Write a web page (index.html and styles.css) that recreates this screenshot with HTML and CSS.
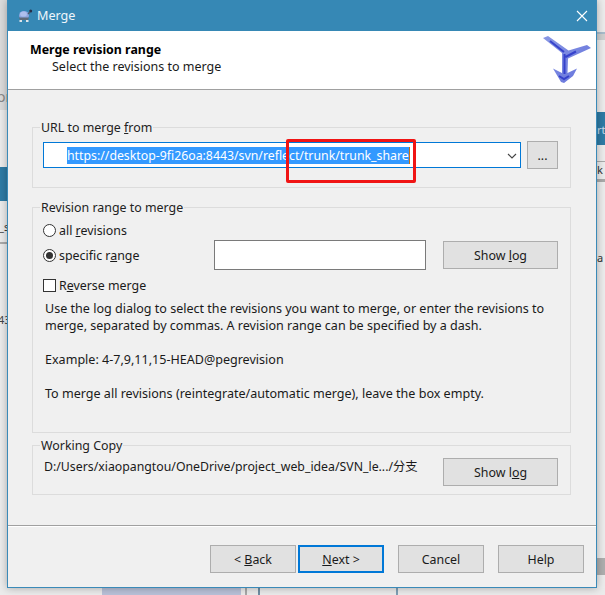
FILE: index.html
```html
<!DOCTYPE html>
<html lang="en">
<head>
<meta charset="utf-8">
<title>Merge</title>
<link rel="stylesheet" href="styles.css">
</head>
<body>
<div class="desktop">
  <div class="bg-left">
    <div class="bg-l1"></div>
    <div class="bg-l2">or</div>
    <div class="bg-l3"></div>
    <div class="bg-l4">_s</div>
    <div class="bg-l6"></div>
    <div class="bg-l5">43</div>
  </div>
  <div class="bg-right">
    <div class="bg-r1"></div>
    <div class="bg-r2">rt</div>
    <div class="bg-r3">k</div>
    <div class="bg-r5"></div>
    <div class="bg-r4">a</div>
    <div class="bg-r6"></div>
  </div>
  <div class="bg-bottom">
    <div class="bg-shape"></div>
    <div class="bg-line l1"></div>
    <div class="bg-line l2"></div>
    <div class="bg-line l3"></div>
  </div>
  <main class="window">
    <header class="titlebar">
      <svg class="app-icon" width="16" height="14" viewBox="0 0 16 14" aria-hidden="true">
        <ellipse cx="7" cy="6.500" rx="5" ry="4.600" fill="#8ea6df"/>
        <ellipse cx="6.500" cy="5" rx="3.400" ry="2.600" fill="#aebfec"/>
        <circle cx="13.700" cy="2" r="1.500" fill="#27304a"/>
        <path d="M11 5 13 3" stroke="#4d5668" stroke-width="1.500"/>
        <path d="M2 8.500h10l-1 2.500H3z" fill="#5f6b78"/>
        <path d="M2.500 11h2.500v2H2.500zM9 11h2.500v2H9z" fill="#dfe4ea"/>
      </svg>
      <span class="title">Merge</span>
      <svg class="close" width="12" height="12" viewBox="0 0 12 12" aria-hidden="true"><path d="M1 1l10 10M11 1 1 11" stroke="#fff" stroke-width="1.100" fill="none"/></svg>
    </header>
    <section class="banner">
      <div class="banner-text">
        <h1>Merge revision range</h1>
        <p>Select the revisions to merge</p>
      </div>
      <svg class="logo" width="54" height="54" viewBox="0 3 54 54" aria-hidden="true">
        <defs>
          <linearGradient id="g" x1="0" y1="0" x2="1" y2="1"><stop offset="0" stop-color="#8a98e4"/><stop offset="1" stop-color="#6472dc"/></linearGradient>
        </defs>
        <path d="M3 8 8 6 28.500 20.500 47 15 51 18 28 28.500 27.500 43 37 38.500 33 46 24 53 21 52 13 38.500 22 43 22 23Z" fill="url(#g)"/>
        <path d="M24.500 24V44M25.500 27 36 21.500M10 11 24 22M19 46 24 49 29 46" stroke="#2a36c8" stroke-width="2" fill="none" opacity=".85"/>
      </svg>
    </section>
    <div class="content">
      <fieldset class="group url-group">
        <legend>URL to merge <u>f</u>rom</legend>
        <div class="url-row">
          <div class="combo">
            <span class="sel">https://desktop-9fi26oa:8443/svn/reflect/trunk/trunk_share</span>
            <svg class="chev" width="10" height="6" viewBox="0 0 10 6" aria-hidden="true"><path d="M1 1l4 4 4-4" stroke="#444" stroke-width="1.100" fill="none"/></svg>
          </div>
          <button class="btn dots" type="button">...</button>
        </div>
      </fieldset>
      <fieldset class="group range-group">
        <legend>Revision range to merge</legend>
        <div class="option first">
          <span class="radio"></span><span>all <u>r</u>evisions</span>
        </div>
        <div class="option specific">
          <span class="radio on"></span><span class="opt-label">specific r<u>a</u>nge</span>
          <div class="range-input"></div>
          <button class="btn wide" type="button">Show <u>l</u>og</button>
        </div>
        <div class="option reverse">
          <span class="check"></span><span>R<u>e</u>verse merge</span>
        </div>
        <div class="help">
          <p>Use the log dialog to select the revisions you want to merge, or enter the revisions to<br>merge, separated by commas. A revision range can be specified by a dash.</p>
          <p>Example: 4-7,9,11,15-HEAD@pegrevision</p>
          <p>To merge all revisions (reintegrate/automatic merge), leave the box empty.</p>
        </div>
      </fieldset>
      <fieldset class="group wc-group">
        <legend>Working Copy</legend>
        <div class="wc-row">
          <span class="path">D:/Users/xiaopangtou/OneDrive/project_web_idea/SVN_le.../分支</span>
          <button class="btn wide" type="button">Show l<u>o</u>g</button>
        </div>
      </fieldset>
    </div>
    <footer class="footer">
      <button class="btn nav" type="button">&lt; <u>B</u>ack</button>
      <button class="btn nav next" type="button"><u>N</u>ext &gt;</button>
      <button class="btn nav after" type="button">Cancel</button>
      <button class="btn nav after" type="button">Help</button>
    </footer>
  </main>
  <div class="annotation"></div>
</div>
</body>
</html>
```
FILE: styles.css
```css
* { box-sizing: border-box; }
html, body { margin: 0; padding: 0; }
body { width: 605px; height: 595px; overflow: hidden; background: #f1f1f1; font-family: "Noto Sans", "Noto Sans CJK SC", sans-serif; font-size: 12.400px; color: #1a1a1a; }
.desktop { position: relative; width: 605px; height: 595px; overflow: hidden; }
.bg-left { position: absolute; left: 0; top: 0; width: 7px; height: 595px; background: #ececec; font-size: 11px; color: #666; overflow: hidden; }
.bg-l1 { position: absolute; left: 4px; top: 0; width: 2px; height: 8px; background: #cbb9a8; }
.bg-l2 { position: absolute; left: 0; top: 0; width: 7px; height: 110px; background: #dcdcdc; padding-top: 87px; color: #888; font-size: 14px; text-indent: -3px; }
.bg-l3 { position: absolute; left: 0; top: 167px; width: 7px; height: 34px; background: #2e7ba5; }
.bg-l4 { position: absolute; left: 0; top: 219px; width: 7px; height: 18px; color: #333; line-height: 16px; text-indent: -1px; }
.bg-l6 { position: absolute; left: 0; top: 242px; width: 7px; height: 2px; background: #aaa; }
.bg-l5 { position: absolute; left: -2px; top: 312px; color: #444; }
.bg-right { position: absolute; right: 0; top: 0; width: 8px; height: 595px; background: #ececec; font-size: 11px; color: #333; overflow: hidden; }
.bg-r1 { position: absolute; left: 0; top: 32px; width: 8px; height: 8px; background: #cfcfcf; border-top: 2px solid #a8bccb; }
.bg-r2 { position: absolute; left: 0; top: 112px; width: 8px; height: 33px; background: #2e7ba5; color: #cde; padding-top: 10px; }
.bg-r3 { position: absolute; left: 0; top: 161px; width: 8px; height: 17px; border-top: 1px solid #aaa; }
.bg-r5 { position: absolute; left: 0; top: 179px; width: 8px; height: 3px; background: #aaa; }
.bg-r4 { position: absolute; left: 0; top: 250px; }
.bg-r6 { position: absolute; left: 0; top: 558px; width: 8px; height: 17px; background: #aeaeae; }
.bg-bottom { position: absolute; left: 0; top: 588px; width: 605px; height: 7px; background: #ebebeb; }
.bg-shape { position: absolute; left: 102px; top: 0; width: 139px; height: 7px; background: #b9c1d8; }
.bg-line { position: absolute; top: 0; width: 2px; height: 7px; }
.bg-line.l1 { left: 245px; background: #a8a8a8; }
.bg-line.l2 { left: 258px; background: #6f8ea3; }
.bg-line.l3 { left: 396px; background: #7f9fb5; }
.window { position: absolute; left: 7px; top: 0; width: 590px; height: 588px; background: #f0f0f0; border: 1px solid #3a8ab8; border-top: 0; display: flex; flex-direction: column; box-shadow: 0 0 8px rgba(0,0,0,.3); }
.titlebar { height: 31px; background: #3688b5; color: #fff; display: flex; align-items: center; padding: 0 8px 0 9px; flex: none; }
.app-icon { flex: none; margin-right: 4px; }
.title { font-size: 12.600px; flex: 1; color: #eef6fb; }
.banner { height: 59px; background: #fff; border-bottom: 1px solid #a0a0a0; display: flex; justify-content: space-between; align-items: flex-start; padding: 8px 2px 0 22px; flex: none; }
.banner h1 { margin: 2px 0 0; font-size: 12.400px; font-weight: 700; line-height: 17px; color: #000; }
.banner p { margin: 0 0 0 22px; font-size: 12.500px; line-height: 17px; }
.logo { margin-top: -6px; }
.content { flex: 1; padding: 0 25px 0 24px; border-bottom: 1px solid #a0a0a0; display: flex; flex-direction: column; min-height: 0; }
.group { margin: 0; padding: 0 12px 0 10px; border: 1px solid #dcdcdc; min-width: 0; flex: none; }
.group legend { padding: 0 1px; margin-left: -3px; line-height: 17px; color: #222; }
.url-group { height: 69px; margin-top: 29px; }
.url-row { display: flex; gap: 6px; align-items: flex-start; margin-top: 6px; }
.combo { flex: 1; height: 26px; background: #fff; border: 1px solid #0078d7; display: flex; align-items: center; padding: 0 3px 0 23px; justify-content: space-between; }
.sel { background: #3399ff; color: #fff; font-size: 12.300px; line-height: 17px; white-space: nowrap; border-right: 1px solid #c8700f; }
.chev { margin-top: 2px; }
.btn { font-family: inherit; font-size: 12.400px; color: #1a1a1a; background: #e1e1e1; border: 1px solid #adadad; padding: 0; }
.dots { width: 31px; height: 28px; margin-top: -1px; }
.wide { width: 115px; height: 28px; flex: none; }
.range-group { height: 234px; margin-top: 11px; }
.option { display: flex; align-items: center; height: 17px; }
.first { margin-top: 6px; }
.radio { width: 13px; height: 13px; border: 1px solid #333; border-radius: 50%; margin-right: 3px; background: #fff; position: relative; flex: none; }
.radio.on::after { content: ""; position: absolute; inset: 2px; border-radius: 50%; background: #333; }
.specific { margin-top: 1px; height: 30px; }
.opt-label { width: 155px; flex: none; }
.range-input { width: 212px; height: 30px; background: #fff; border: 1px solid #7a7a7a; margin-right: 17px; flex: none; }
.reverse { margin-top: 7px; }
.check { width: 13px; height: 13px; border: 1px solid #333; margin-right: 3px; background: #fff; flex: none; }
.help { margin: 6px 0 0 2px; font-size: 12.550px; line-height: 17px; }
.help p { margin: 0 0 17px; white-space: nowrap; }
.wc-group { height: 58px; margin-top: 4px; }
.wc-row { display: flex; justify-content: space-between; align-items: flex-start; margin-top: 4px; }
.path { margin: 0 0 0 1px; font-size: 12.300px; line-height: 17px; white-space: nowrap; }
.footer { height: 61px; flex: none; padding: 18px 12px 0 0; border-top: 1px solid #fff; display: flex; justify-content: flex-end; gap: 2px; }
.nav { width: 86px; height: 28px; }
.after { margin-left: 12px; }
.next { border: 2px solid #0078d7; }
.annotation { position: absolute; left: 286px; top: 139px; width: 130px; height: 44px; border: 3px solid #f01414; border-radius: 2px; }
```
